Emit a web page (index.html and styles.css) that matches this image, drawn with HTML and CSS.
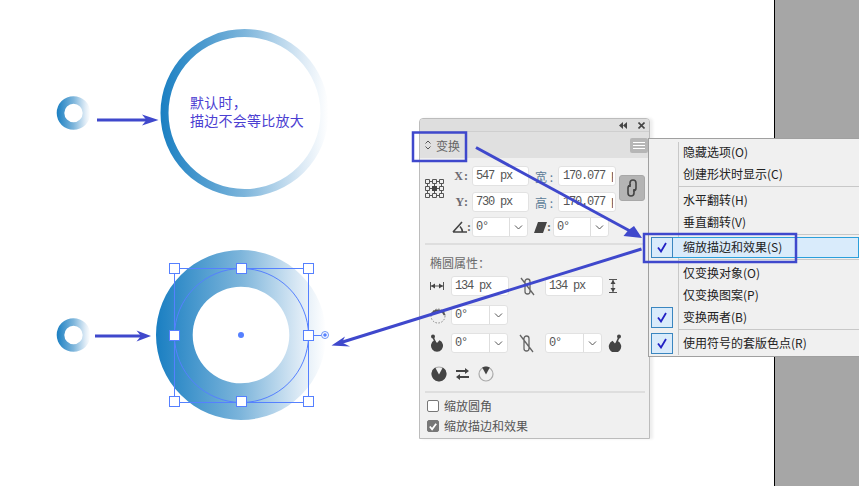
FILE: index.html
```html
<!DOCTYPE html>
<html>
	<head>
		<meta charset="UTF-8">
		<title>变换</title>
		<link rel="stylesheet" href="styles.css">
	</head>
	<body>
		<div class="stage">
			<div class="canvas">
				<!-- 圆环示意 -->
				<svg class="art" width="774" height="486" viewBox="0 0 774 486">
					<defs>
						<linearGradient id="blueFade">
							<stop offset="0" stop-color="#1a7fc2"/>
							<stop offset="0.5" stop-color="#7db5db"/>
							<stop offset="0.85" stop-color="#deebf6"/>
							<stop offset="1" stop-color="#ffffff"/>
						</linearGradient>
					</defs>
					<path fill="url(#blueFade)" fill-rule="evenodd" d="M56.7 113a16.8 16.8 0 1 0 33.6 0a16.8 16.8 0 1 0 -33.6 0zM64.3 113a9.2 9.2 0 1 0 18.4 0a9.2 9.2 0 1 0 -18.4 0z"/>
					<path fill="url(#blueFade)" fill-rule="evenodd" d="M160.5 113a84 84 0 1 0 168 0a84 84 0 1 0 -168 0zM168.5 113a76 76 0 1 0 152 0a76 76 0 1 0 -152 0z"/>
					<path fill="url(#blueFade)" fill-rule="evenodd" d="M56.7 335a16.8 16.8 0 1 0 33.6 0a16.8 16.8 0 1 0 -33.6 0zM64.3 335a9.2 9.2 0 1 0 18.4 0a9.2 9.2 0 1 0 -18.4 0z"/>
					<path fill="url(#blueFade)" fill-rule="evenodd" d="M156 335a85 85 0 1 0 170 0a85 85 0 1 0 -170 0zM192.7 335a48.3 48.3 0 1 0 96.6 0a48.3 48.3 0 1 0 -96.6 0z"/>
					<!-- 选框 -->
					<g class="sel">
						<rect x="174.5" y="268.5" width="134" height="134"/>
						<circle cx="241.5" cy="335.5" r="67"/>
						<path d="M308 335.5H321"/>
						<rect class="handle" x="169.5" y="263.5" width="10" height="10"/>
						<rect class="handle" x="236.5" y="263.5" width="10" height="10"/>
						<rect class="handle" x="303.5" y="263.5" width="10" height="10"/>
						<rect class="handle" x="169.5" y="330.5" width="10" height="10"/>
						<rect class="handle" x="303.5" y="330.5" width="10" height="10"/>
						<rect class="handle" x="169.5" y="396.5" width="10" height="10"/>
						<rect class="handle" x="236.5" y="396.5" width="10" height="10"/>
						<rect class="handle" x="303.5" y="396.5" width="10" height="10"/>
						<circle class="rot" cx="325" cy="335" r="3.5"/>
						<circle class="dot" cx="325" cy="335" r="1.8"/>
						<circle class="dot" cx="241" cy="335" r="3"/>
					</g>
				</svg>
				<div class="note">默认时，<br>描边不会等比放大</div>
			</div>
			<div class="side"></div>

			<!-- 变换面板 -->
			<div class="panel">
				<div class="panel-top">
					<svg class="ico" width="8" height="7" viewBox="0 0 8 7"><path d="M4 0V7L0 3.500zM8 0V7L4 3.500z"/></svg>
					<svg class="ico ico-close" width="7" height="7" viewBox="0 0 7 7"><path class="line2" d="M.5 .5L6.500 6.500M6.500 .5L.5 6.500"/></svg>
				</div>
				<div class="panel-tab">
					<svg class="ico" width="6" height="10" viewBox="0 0 6 10"><path class="line1" d="M.5 3.500L3 1L5.500 3.500M.5 6.500L3 9L5.500 6.500"/></svg>
					<span class="tab-name">变换</span>
					<div class="menu-btn"><i></i><i></i><i></i></div>
				</div>

				<div class="xform">
					<svg class="ico anchor" width="19" height="19" viewBox="0 0 19 19">
						<path class="line1" d="M4.500 2.500H7.500M11.500 2.500H14.500M4.500 9.500H7.500M11.500 9.500H14.500M4.500 16.500H7.500M11.500 16.500H14.500M2.500 4.500V7.500M2.500 11.500V14.500M9.500 4.500V7.500M9.500 11.500V14.500M16.500 4.500V7.500M16.500 11.500V14.500"/>
						<path class="line1 cell" d="M.5 .5h4v4h-4zM7.500 .5h4v4h-4zM14.500 .5h4v4h-4zM.5 7.500h4v4h-4zM14.500 7.500h4v4h-4zM.5 14.500h4v4h-4zM7.500 14.500h4v4h-4zM14.500 14.500h4v4h-4z"/>
						<rect x="7" y="7" width="5" height="5"/>
					</svg>
					<div class="xform-rows">
						<div class="row row-a">
							<span class="lbl lbl-a">X:</span>
							<div class="field w57"><span class="val">547 px</span></div>
							<span class="lbl lbl-b">宽 :</span>
							<div class="field w58"><span class="val clip">170.077 px</span></div>
						</div>
						<div class="row row-b">
							<span class="lbl lbl-a">Y:</span>
							<div class="field w57"><span class="val">730 px</span></div>
							<span class="lbl lbl-b">高 :</span>
							<div class="field w58"><span class="val clip">170.077 px</span></div>
						</div>
						<div class="row row-c">
							<span class="lbl lbl-a">
								<svg class="ico" width="15" height="12" viewBox="0 0 15 12"><path class="line2" d="M1 11H15M1 11L10 1M8 5.500Q10.500 8 10.500 11"/></svg>:
							</span>
							<div class="field sel-box w56"><span class="val">0°</span><span class="chev"><svg class="ico" width="9" height="5" viewBox="0 0 9 5"><path class="line1" d="M1 .5L4.500 4L8 .5"/></svg></span></div>
							<span class="lbl lbl-c">
								<svg class="ico" width="13" height="11" viewBox="0 0 13 11"><path d="M4 0H13L9 11H0z"/></svg>:
							</span>
							<div class="field sel-box w56"><span class="val">0°</span><span class="chev"><svg class="ico" width="9" height="5" viewBox="0 0 9 5"><path class="line1" d="M1 .5L4.500 4L8 .5"/></svg></span></div>
						</div>
					</div>
					<div class="link-btn">
						<svg class="ico" width="12" height="20" viewBox="0 0 12 20"><path class="line2" d="M4 9V5A3 3 0 0 1 10 5V10A3 3 0 0 1 7 13M8 11V15A3 3 0 0 1 2 15V10A3 3 0 0 1 5 7"/></svg>
					</div>
				</div>

				<div class="rule"></div>
				<div class="group-title">椭圆属性：</div>

				<div class="prop prop-size">
					<span class="prop-ico"><svg class="ico" width="14" height="8" viewBox="0 0 14 8"><path class="line1" d="M.5 0V8M13.500 0V8M1 4H13"/><path d="M1 4L5 1.500V6.500zM13 4L9 1.500V6.500z"/></svg></span>
					<div class="field w58"><span class="val">134 px</span></div>
					<span class="prop-mid">
						<svg class="ico" width="15" height="19" viewBox="0 0 15 19"><path class="line1g" d="M1 1L14 18M5 9V4.500A2.500 2.500 0 0 1 10 4.500V10M10 9V14.500A2.500 2.500 0 0 1 5 14.500V9"/></svg>
					</span>
					<div class="field w58"><span class="val">134 px</span></div>
					<svg class="ico prop-end-h" width="8" height="14" viewBox="0 0 8 14"><path class="line1" d="M0 .5H8M0 13.500H8M4 1V13"/><path d="M4 1L1.500 5H6.500zM4 13L1.500 9H6.500z"/></svg>
				</div>
				<div class="prop prop-turn">
					<span class="prop-ico"><svg class="ico" width="16" height="17" viewBox="0 0 16 17"><circle class="dash" cx="8" cy="9" r="7"/><path class="line3" d="M1.500 8A7 7 0 0 1 14.500 8"/></svg></span>
					<div class="field sel-box w57"><span class="val">0°</span><span class="chev"><svg class="ico" width="9" height="5" viewBox="0 0 9 5"><path class="line1" d="M1 .5L4.500 4L8 .5"/></svg></span></div>
				</div>
				<div class="prop prop-pie">
					<span class="prop-ico"><svg class="ico" width="13" height="18" viewBox="0 0 13 18"><circle cx="3" cy="2.500" r="2"/><path class="line2" d="M3 3L6 10"/><path d="M7 9L9.500 6.300A6 6 0 1 1 4.500 6.300z"/></svg></span>
					<div class="field sel-box w57"><span class="val">0°</span><span class="chev"><svg class="ico" width="9" height="5" viewBox="0 0 9 5"><path class="line1" d="M1 .5L4.500 4L8 .5"/></svg></span></div>
					<span class="prop-mid">
						<svg class="ico" width="15" height="19" viewBox="0 0 15 19"><path class="line1g" d="M1 1L14 18M5 9V4.500A2.500 2.500 0 0 1 10 4.500V10M10 9V14.500A2.500 2.500 0 0 1 5 14.500V9"/></svg>
					</span>
					<div class="field sel-box w57"><span class="val">0°</span><span class="chev"><svg class="ico" width="9" height="5" viewBox="0 0 9 5"><path class="line1" d="M1 .5L4.500 4L8 .5"/></svg></span></div>
					<svg class="ico prop-end-p" width="14" height="18" viewBox="0 0 14 18"><circle cx="11" cy="2.500" r="2"/><path class="line2" d="M11 3L8 10"/><path d="M7 9.500L4.500 6.800A6.200 6.200 0 1 0 9.500 6.800z"/></svg>
				</div>
				<div class="prop prop-swap">
					<svg class="ico" width="16" height="16" viewBox="0 0 16 16"><circle class="ring-g" cx="8" cy="8" r="7"/><path d="M8 8.500L4.200 1.500A7.500 7.500 0 1 0 11.800 1.500z"/></svg>
					<svg class="ico swap" width="13" height="12" viewBox="0 0 13 12"><path d="M0 2H9V0L13 3L9 6V4H0zM13 8H4V6L0 9L4 12V10H13z"/></svg>
					<svg class="ico swap2" width="16" height="16" viewBox="0 0 16 16"><circle class="ring-g" cx="8" cy="8" r="7"/><path d="M8 8.500L4.200 1.500A7.500 7.500 0 0 1 11.800 1.500z"/></svg>
				</div>

				<div class="rule rule-b"></div>
				<div class="check-row first-check"><span class="box"></span><span class="check-txt">缩放圆角</span></div>
				<div class="check-row"><span class="box on"><svg width="11" height="11" viewBox="0 0 11 11"><path d="M2 5.500L4.500 8.500L9 2.500" fill="none" stroke="#fff" stroke-width="2"/></svg></span><span class="check-txt">缩放描边和效果</span></div>
			</div>

			<!-- 右键菜单 -->
			<div class="menu">
				<div class="item"><span class="tick"></span><span class="txt">隐藏选项(O)</span></div>
				<div class="item"><span class="tick"></span><span class="txt">创建形状时显示(C)</span></div>
				<div class="sep"></div>
				<div class="item"><span class="tick"></span><span class="txt">水平翻转(H)</span></div>
				<div class="item"><span class="tick"></span><span class="txt">垂直翻转(V)</span></div>
				<div class="sep"></div>
				<div class="item item-on"><span class="tick on"><svg width="12" height="11" viewBox="0 0 12 11"><path d="M2 5.500L5 9.500L10 1" fill="none" stroke="#2222c4" stroke-width="1.800"/></svg></span><span class="txt">缩放描边和效果(S)</span></div>
				<div class="sep"></div>
				<div class="item"><span class="tick"></span><span class="txt">仅变换对象(O)</span></div>
				<div class="item"><span class="tick"></span><span class="txt">仅变换图案(P)</span></div>
				<div class="item"><span class="tick on"><svg width="12" height="11" viewBox="0 0 12 11"><path d="M2 5.500L5 9.500L10 1" fill="none" stroke="#2222c4" stroke-width="1.800"/></svg></span><span class="txt">变换两者(B)</span></div>
				<div class="sep"></div>
				<div class="item"><span class="tick on"><svg width="12" height="11" viewBox="0 0 12 11"><path d="M2 5.500L5 9.500L10 1" fill="none" stroke="#2222c4" stroke-width="1.800"/></svg></span><span class="txt">使用符号的套版色点(R)</span></div>
			</div>

			<!-- 标注 -->
			<svg class="marks" width="859" height="486" viewBox="0 0 859 486">
				<rect x="413" y="132.500" width="53" height="28.500"/>
				<rect x="644" y="234" width="152" height="28"/>
				<path d="M97 120H148"/>
				<path class="tip" d="M158.500 120L142 114.500L146.500 120L142 125.500z"/>
				<path d="M95 336H141"/>
				<path class="tip" d="M151 336L136.500 330.500L141 336L136.500 341.500z"/>
				<path d="M476 147.500L630 231"/>
				<path class="tip" d="M642 238L623.500 236L628.500 230L634 226z"/>
				<path d="M641.500 249L341 342.500"/>
				<path class="tip" d="M331.500 345.500L345 336.500L342 342.500L350 346.500z"/>
			</svg>
		</div>
	</body>
</html>
```

FILE: styles.css
```css
*{
	margin: 0;
	padding: 0;
	box-sizing: border-box;
}

body{
	background-color: #fff;
	overflow: hidden;
	font-family: "Noto Sans CJK SC", "Liberation Sans", sans-serif;
	font-size: 12px;
}

/*整个画面*/
.stage{
	position: relative;
	width: 859px;
	height: 486px;
	display: flex;
	overflow: hidden;
}

.canvas{
	position: relative;
	flex: 1;
}

.side{
	width: 85px;
	background-color: #a6a6a6;
	border-left: 1px solid #000;
}

.art{
	position: absolute;
	left: 0;
	top: 0;
}

.note{
	position: absolute;
	left: 190px;
	top: 93px;
	font-size: 14px;
	line-height: 18px;
	letter-spacing: 0.25px;
	color: #4c40d2;
	white-space: nowrap;
}

/*选框*/
.sel rect,
.sel circle,
.sel path{
	fill: none;
	stroke: #5580ff;
	stroke-width: 1;
}

.sel .handle{
	fill: #fff;
	stroke-width: 1;
}

.sel .rot{
	fill: #fff;
	stroke: #6c93f5;
}

.sel .dot{
	fill: #5580ff;
	stroke: none;
}

/*标注*/
.marks{
	position: absolute;
	left: 0;
	top: 0;
	z-index: 3;
	pointer-events: none;
}

.marks rect,
.marks path{
	fill: none;
	stroke: #3f48cc;
	stroke-width: 3;
}

.marks rect{
	stroke-width: 2.5;
}

.marks .tip{
	fill: #3f48cc;
	stroke: none;
}

/*图标*/
.ico{
	display: block;
	fill: #444;
	flex: none;
}

.ico .line1{
	fill: none;
	stroke: #555;
	stroke-width: 1;
}

.ico .line2{
	fill: none;
	stroke: #444;
	stroke-width: 1.6;
}

.ico .line3{
	fill: none;
	stroke: #555;
	stroke-width: 2;
}

.ico .line1g{
	fill: none;
	stroke: #666;
	stroke-width: 1.3;
}

.ico .dash{
	fill: none;
	stroke: #888;
	stroke-width: 1;
	stroke-dasharray: 1.500 1.500;
}

.ico .ring-g{
	fill: none;
	stroke: #aaa;
	stroke-width: 1.2;
}

/*面板*/
.panel{
	position: absolute;
	left: 419px;
	top: 118px;
	width: 231px;
	height: 321px;
	z-index: 1;
	background-color: #f0f0f0;
	border: 1px solid #bcbcbc;
	border-radius: 4px 4px 0 0;
	box-shadow: 3px 0 3px rgba(0,0,0,0.07);
	color: #555;
}

.panel-top{
	height: 13px;
	background-color: #dedede;
	border-bottom: 1px solid #cfcfcf;
	border-radius: 3px 3px 0 0;
	display: flex;
	align-items: center;
	justify-content: flex-end;
	padding-right: 4px;
	gap: 11px;
}

.panel-tab{
	height: 26px;
	background-color: #e0e0e0;
	display: flex;
	align-items: center;
	padding-left: 5px;
}

.tab-name{
	margin-left: 5px;
	color: #666;
	font-size: 12px;
}

.menu-btn{
	margin-left: auto;
	margin-right: 1px;
	width: 18px;
	height: 15px;
	background-color: #b6b6b6;
	border-radius: 2px;
	display: flex;
	flex-direction: column;
	justify-content: center;
	gap: 2px;
	padding: 0 3px;
}

.menu-btn i{
	display: block;
	height: 1px;
	background-color: #fff;
}

.xform{
	display: flex;
	align-items: flex-start;
	padding: 8px 0 0 5px;
}

.anchor{
	margin-top: 13px;
	margin-right: 12px;
}

.ico .cell{
	fill: #f0f0f0;
}

.xform-rows{
	width: 160px;
	flex: none;
}

.row{
	display: flex;
	height: 20px;
}

.row-b{
	margin-top: 6px;
}

.row-c{
	margin-top: 5px;
}

.lbl{
	display: flex;
	align-items: center;
	flex: none;
	color: #666;
	white-space: nowrap;
}

.lbl-a{
	width: 16px;
	justify-content: flex-end;
	padding-right: 1px;
	font-family: "Liberation Serif", serif;
	font-size: 12px;
	font-weight: bold;
}

.row-a .lbl-a,
.row-b .lbl-a{
	padding-right: 3px;
	letter-spacing: 1px;
	color: #6d6a70;
}

.lbl-b{
	width: 29px;
	padding-left: 6px;
	font-size: 12px;
	color: #5b7c98;
}

.lbl-c{
	width: 25px;
	padding-left: 6px;
	font-family: "Liberation Serif", serif;
	font-weight: bold;
}

.field{
	height: 20px;
	background-color: #fff;
	border: 1px solid #e2e2e2;
	border-radius: 3px;
	display: flex;
	align-items: center;
	flex: none;
	padding-left: 3px;
}

.w56{ width: 56px; }
.w57{ width: 57px; }
.w58{ width: 58px; }

.val{
	font-family: "Liberation Mono", monospace;
	font-size: 12px;
	letter-spacing: -1.2px;
	color: #555;
	white-space: pre;
}

.clip{
	display: block;
	width: 50px;
	overflow: hidden;
	margin-left: 1px;
}

.sel-box{
	padding-right: 0;
}

.sel-box .val{
	flex: 1;
}

.chev{
	width: 18px;
	height: 18px;
	border-left: 1px solid #dedede;
	display: flex;
	align-items: center;
	justify-content: center;
}

.link-btn{
	width: 26px;
	height: 26px;
	margin: 9px 0 0 3px;
	background-color: #b4b4b4;
	border: 1px solid #a8a8a8;
	border-radius: 3px;
	display: flex;
	align-items: center;
	justify-content: center;
	flex: none;
}

.rule{
	height: 2px;
	margin: 6px 4px 0 5px;
	background-color: #dedede;
}

.group-title{
	height: 16px;
	line-height: 16px;
	margin: 10px 0 0 10px;
	color: #6a6a6a;
}

.prop{
	display: flex;
	align-items: center;
	height: 20px;
	padding-left: 10px;
}

.prop-size{ margin-top: 5px; }
.prop-turn{ margin-top: 9px; }
.prop-pie{ margin-top: 8px; }

.prop-swap{
	margin-top: 12px;
	height: 18px;
	padding-left: 11px;
}

.prop-ico{
	width: 21px;
	flex: none;
	display: flex;
	align-items: center;
}

.prop-mid{
	width: 36px;
	flex: none;
	display: flex;
	justify-content: center;
}

.prop-pie .prop-mid{
	width: 37px;
}

.prop-end-h{
	margin-left: 6px;
}

.prop-end-p{
	margin-left: 6px;
}

.swap{
	margin-left: 9px;
}

.swap2{
	margin-left: 9px;
}

.rule-b{
	margin-top: 8px;
}

.check-row{
	display: flex;
	align-items: center;
	height: 20px;
	padding-left: 7px;
	color: #555;
}

.check-txt{
	padding-bottom: 2px;
}

.first-check{
	margin-top: 3px;
}

.box{
	width: 12px;
	height: 12px;
	margin-right: 5px;
	background-color: #fff;
	border: 1px solid #777;
	border-radius: 2px;
	display: flex;
	align-items: center;
	justify-content: center;
}

.box.on{
	background-color: #777;
}

/*菜单*/
.menu{
	position: absolute;
	left: 648px;
	top: 138px;
	width: 211px;
	height: 219px;
	z-index: 2;
	padding: 2px 0 1px 2px;
	background: linear-gradient(#c8c8c8, #c8c8c8) 29px 3px / 1px 213px no-repeat, #f0f0f0;
	border: 1px solid #a0a0a0;
	border-right: 0;
	color: #222;
}

.item{
	display: flex;
	align-items: center;
	height: 22px;
}

.item-on{
	height: 21px;
	margin-bottom: 1px;
	background-color: #d9ebfb;
	border: 1px solid #2b9fdb;
}

.tick{
	width: 22px;
	height: 100%;
	flex: none;
	display: flex;
	align-items: center;
	justify-content: center;
}

.tick.on{
	height: 21px;
	background-color: #d9ebfb;
	border: 1px solid #3a86c0;
}

.item-on .tick.on{
	margin: -1px 0 -1px -1px;
}

.txt{
	margin-left: 10px;
	padding-bottom: 2px;
	white-space: nowrap;
}

.sep{
	height: 1px;
	margin: 1px 0 2px 28px;
	background-color: #c8c8c8;
}
```
